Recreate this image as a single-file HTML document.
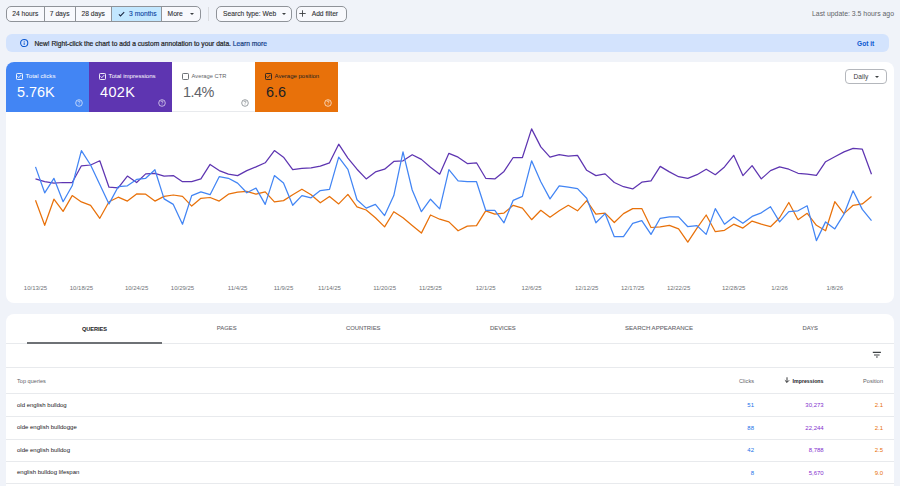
<!DOCTYPE html>
<html><head><meta charset="utf-8">
<style>
*{box-sizing:border-box;margin:0;padding:0}
html,body{width:900px;height:486px;overflow:hidden}
body{background:#f0f3f9;font-family:"Liberation Sans",sans-serif;position:relative;color:#202124}
.abs{position:absolute}
.seg{position:absolute;top:6px;height:15.5px;border:1px solid #8f9399;border-radius:5px;display:flex;overflow:hidden;background:#f8f9fd}
.seg div{height:100%;display:flex;align-items:center;justify-content:center;font-size:6.7px;white-space:nowrap;color:#303134;-webkit-text-stroke:0.1px #303134;border-right:1px solid #8f9399}
.seg div:last-child{border-right:none}
.btn{position:absolute;top:6px;height:15.5px;border:1px solid #8f9399;border-radius:5px;display:flex;align-items:center;font-size:6.7px;color:#303134;-webkit-text-stroke:0.1px #303134;background:#f8f9fd;white-space:nowrap}
.car{display:inline-block;width:0;height:0;border-left:2.5px solid transparent;border-right:2.5px solid transparent;border-top:2.5px solid #3c4043}
.card{position:absolute;background:#fff;border-radius:8px;overflow:hidden}
.tile{position:absolute;top:0;height:50.7px;width:83px}
.tile .cbs{position:absolute;left:10px;top:11.2px}
.tile .lbl{position:absolute;left:19.6px;top:10.5px;font-size:6.2px;line-height:8px;white-space:nowrap}
.tile .val{position:absolute;left:11px;top:22.4px;font-size:14.45px;line-height:16px;white-space:nowrap}
.tile .hlps{position:absolute;left:69px;top:37.2px}
.xl{position:absolute;top:284.5px;font-size:6px;color:#6f7378;white-space:nowrap;transform:translateX(-50%)}
.tab{position:absolute;top:325.4px;font-size:5.85px;color:#5f6368;white-space:nowrap;transform:translateX(-50%);-webkit-text-stroke:0.08px #5f6368}
.hr{position:absolute;left:6px;width:888px;height:1px;background:#e8eaed}
.q{position:absolute;left:17px;font-size:6px;color:#202124;white-space:nowrap}
.n{position:absolute;font-size:6px;white-space:nowrap;transform:translateX(-100%)}
</style></head><body>

<!-- top toolbar -->
<div class="seg" style="left:6px;width:195px">
  <div style="width:38px">24 hours</div>
  <div style="width:31.5px">7 days</div>
  <div style="width:36.2px">28 days</div>
  <div style="width:51px;background:#c2e7ff;color:#0842a0;-webkit-text-stroke:0.1px #0842a0"><svg width="7" height="6" viewBox="0 0 7 6" style="margin-right:4.5px;margin-left:1.5px"><path d="M0.9 3.4L2.5 4.9L6.2 1.2" fill="none" stroke="#1f2a44" stroke-width="1.1"/></svg>3 months</div>
  <div style="width:38.3px;justify-content:flex-start;padding-left:5.5px">More<i class="car" style="margin-left:7px"></i></div>
</div>
<div class="abs" style="left:208px;top:7px;width:1px;height:14px;background:#dadce0"></div>
<div class="btn" style="left:215.5px;width:76.5px;padding-left:6.6px">Search type: Web<i class="car" style="margin-left:6.2px"></i></div>
<div class="btn" style="left:296px;width:51px;padding-left:2.2px"><svg width="7" height="7" viewBox="0 0 7 7" style="margin-right:5.5px"><path d="M3.5 0.3v6.4M0.3 3.5h6.4" stroke="#3c4043" stroke-width="0.9"/></svg>Add filter</div>
<div class="abs" style="left:812px;top:9.5px;font-size:6.9px;color:#5f6368;white-space:nowrap">Last update: 3.5 hours ago</div>

<!-- banner -->
<div class="abs" style="left:6px;top:34px;width:882.5px;height:18.3px;background:#d3e3fd;border-radius:6px"></div>
<svg class="abs" style="left:19px;top:38px" width="10.4" height="10" viewBox="0 0 10.4 10"><circle cx="5.2" cy="5" r="3.6" fill="none" stroke="#0b57d0" stroke-width="1.05"/><path d="M5.2 4.4V7" stroke="#0b57d0" stroke-width="0.9"/><circle cx="5.2" cy="3.3" r="0.5" fill="#0b57d0"/></svg>
<div class="abs" style="left:34.5px;top:39.7px;font-size:6.66px;color:#1f1f1f;white-space:nowrap;-webkit-text-stroke:0.2px #1f1f1f">New! Right-click the chart to add a custom annotation to your data. <span style="color:#0b57d0">Learn more</span></div>
<div class="abs" style="left:857px;top:39.7px;font-size:6.6px;color:#0b57d0;white-space:nowrap;font-weight:bold">Got it</div>

<!-- chart card -->
<div class="card" style="left:6px;top:61.5px;width:888px;height:241px">
  <div class="tile" style="left:0;background:#4285f4;color:#fff"><svg class="cbs" width="7" height="7" viewBox="0 0 7 7"><rect x="0.5" y="0.5" width="6" height="6" rx="0.8" fill="none" stroke="#fff" stroke-width="0.9"/><path d="M1.5 3.4L2.8 4.7L5.4 1.9" fill="none" stroke="#fff" stroke-width="0.85"/></svg><div class="lbl">Total clicks</div><div class="val">5.76K</div><svg class="hlps" width="8" height="8" viewBox="0 0 8 8"><circle cx="4" cy="4" r="3.3" fill="none" stroke="rgba(255,255,255,0.8)" stroke-width="0.8"/><path d="M2.9 3.1C2.9 2.4 3.4 2 4 2C4.6 2 5.1 2.4 5.1 3C5.1 3.7 4 3.8 4 4.6" fill="none" stroke="rgba(255,255,255,0.8)" stroke-width="0.7"/><circle cx="4" cy="5.7" r="0.4" fill="rgba(255,255,255,0.8)"/></svg></div>
  <div class="tile" style="left:83px;background:#5e35b1;color:#fff"><svg class="cbs" width="7" height="7" viewBox="0 0 7 7"><rect x="0.5" y="0.5" width="6" height="6" rx="0.8" fill="none" stroke="#fff" stroke-width="0.9"/><path d="M1.5 3.4L2.8 4.7L5.4 1.9" fill="none" stroke="#fff" stroke-width="0.85"/></svg><div class="lbl" style="font-size:6.1px">Total impressions</div><div class="val" style="letter-spacing:0.35px">402K</div><svg class="hlps" width="8" height="8" viewBox="0 0 8 8"><circle cx="4" cy="4" r="3.3" fill="none" stroke="rgba(255,255,255,0.8)" stroke-width="0.8"/><path d="M2.9 3.1C2.9 2.4 3.4 2 4 2C4.6 2 5.1 2.4 5.1 3C5.1 3.7 4 3.8 4 4.6" fill="none" stroke="rgba(255,255,255,0.8)" stroke-width="0.7"/><circle cx="4" cy="5.7" r="0.4" fill="rgba(255,255,255,0.8)"/></svg></div>
  <div class="tile" style="left:166px;background:#fff;color:#5f6368;border-bottom:1px solid #e8eaed"><svg class="cbs" width="7" height="7" viewBox="0 0 7 7"><rect x="0.5" y="0.5" width="6" height="6" rx="0.8" fill="none" stroke="#5f6368" stroke-width="0.9"/></svg><div class="lbl" style="font-size:5.75px">Average CTR</div><div class="val" style="color:#5f6368;letter-spacing:-0.55px">1.4%</div><svg class="hlps" width="8" height="8" viewBox="0 0 8 8"><circle cx="4" cy="4" r="3.3" fill="none" stroke="#80868b" stroke-width="0.8"/><path d="M2.9 3.1C2.9 2.4 3.4 2 4 2C4.6 2 5.1 2.4 5.1 3C5.1 3.7 4 3.8 4 4.6" fill="none" stroke="#80868b" stroke-width="0.7"/><circle cx="4" cy="5.7" r="0.4" fill="#80868b"/></svg></div>
  <div class="tile" style="left:249px;background:#e8710a;color:#202124"><svg class="cbs" width="7" height="7" viewBox="0 0 7 7"><rect x="0.5" y="0.5" width="6" height="6" rx="0.8" fill="none" stroke="#202124" stroke-width="0.9"/><path d="M1.5 3.4L2.8 4.7L5.4 1.9" fill="none" stroke="#202124" stroke-width="0.85"/></svg><div class="lbl" style="font-size:6.0px">Average position</div><div class="val">6.6</div><svg class="hlps" width="8" height="8" viewBox="0 0 8 8"><circle cx="4" cy="4" r="3.3" fill="none" stroke="rgba(255,255,255,0.85)" stroke-width="0.8"/><path d="M2.9 3.1C2.9 2.4 3.4 2 4 2C4.6 2 5.1 2.4 5.1 3C5.1 3.7 4 3.8 4 4.6" fill="none" stroke="rgba(255,255,255,0.85)" stroke-width="0.7"/><circle cx="4" cy="5.7" r="0.4" fill="rgba(255,255,255,0.85)"/></svg></div>
  <div class="abs" style="left:839px;top:7.5px;width:41.5px;height:15px;border:1px solid #b4b7bc;border-radius:4px;font-size:6.6px;color:#3c4043;padding-left:7.6px;line-height:13px;white-space:nowrap">Daily<i class="car" style="margin-left:7px;vertical-align:1px"></i></div>
</div>

<svg class="abs" style="left:0;top:0" width="900" height="486" viewBox="0 0 900 486">
  <polyline fill="none" stroke="#e8710a" stroke-width="1.25" stroke-linejoin="round" points="35.5,200.3 44.7,225.3 53.9,199.2 63.1,211.4 72.2,195.6 81.4,201.9 90.6,205.3 99.8,218.3 109.0,201.7 118.2,197.2 127.4,201.1 136.6,193.9 145.7,194.2 154.9,201.1 164.1,196.4 173.3,195.0 182.5,196.4 191.7,206.1 200.9,198.3 210.1,197.5 219.2,201.1 228.4,194.2 237.6,192.2 246.8,191.4 256.0,194.2 265.2,191.9 274.4,201.9 283.5,200.6 292.7,194.7 301.9,189.2 311.1,194.7 320.3,202.8 329.5,196.4 338.7,203.9 347.9,194.4 357.0,206.9 366.2,210.0 375.4,217.8 384.6,226.9 393.8,211.7 403.0,217.8 412.2,225.6 421.4,233.1 430.5,215.0 439.7,219.2 448.9,221.9 458.1,230.8 467.3,226.1 476.5,225.6 485.7,210.8 494.8,214.2 504.0,213.1 513.2,205.3 522.4,208.1 531.6,219.7 540.8,210.3 550.0,217.2 559.2,210.8 568.3,205.3 577.5,210.8 586.7,200.6 595.9,214.2 605.1,213.1 614.3,222.5 623.5,213.6 632.7,208.6 641.8,208.6 651.0,227.5 660.2,226.9 669.4,225.3 678.6,228.9 687.8,242.2 697.0,228.1 706.2,215.0 715.3,231.7 724.5,230.3 733.7,224.2 742.9,228.1 752.1,221.1 761.3,224.2 770.5,226.7 779.6,217.8 788.8,202.5 798.0,219.7 807.2,213.3 816.4,225.3 825.6,230.8 834.8,201.7 844.0,213.6 853.1,205.3 862.3,203.9 871.5,196.4"/>
  <polyline fill="none" stroke="#5e35b1" stroke-width="1.25" stroke-linejoin="round" points="35.5,178.9 44.7,181.7 53.9,183.1 63.1,182.5 72.2,182.5 81.4,165.8 90.6,165.0 99.8,160.8 109.0,187.2 118.2,187.8 127.4,176.1 136.6,182.5 145.7,173.9 154.9,173.3 164.1,176.1 173.3,175.6 182.5,181.7 191.7,181.7 200.9,178.9 210.1,164.4 219.2,170.6 228.4,174.2 237.6,175.6 246.8,170.6 256.0,166.9 265.2,162.8 274.4,150.6 283.5,157.2 292.7,169.7 301.9,168.3 311.1,167.8 320.3,166.1 329.5,162.8 338.7,144.2 347.9,158.1 357.0,169.2 366.2,178.9 375.4,171.9 384.6,169.2 393.8,161.4 403.0,160.8 412.2,154.7 421.4,159.4 430.5,167.2 439.7,174.2 448.9,153.3 458.1,157.2 467.3,163.6 476.5,162.8 485.7,178.3 494.8,178.9 504.0,171.4 513.2,157.5 522.4,157.5 531.6,128.9 540.8,146.9 550.0,157.2 559.2,154.7 568.3,156.1 577.5,155.3 586.7,170.3 595.9,175.6 605.1,173.9 614.3,182.5 623.5,186.7 632.7,188.9 641.8,182.2 651.0,180.8 660.2,166.4 669.4,171.9 678.6,176.7 687.8,178.3 697.0,174.7 706.2,169.2 715.3,174.7 724.5,166.9 733.7,155.3 742.9,175.6 752.1,165.6 761.3,178.9 770.5,170.6 779.6,166.9 788.8,169.2 798.0,173.3 807.2,174.2 816.4,175.3 825.6,161.7 834.8,156.7 844.0,151.9 853.1,148.3 862.3,149.2 871.5,174.2"/>
  <polyline fill="none" stroke="#4285f4" stroke-width="1.25" stroke-linejoin="round" points="35.5,166.9 44.7,192.8 53.9,178.3 63.1,201.7 72.2,185.8 81.4,150.6 90.6,165.0 99.8,184.4 109.0,203.9 118.2,186.7 127.4,185.8 136.6,179.4 145.7,178.3 154.9,169.7 164.1,198.9 173.3,204.4 182.5,224.2 191.7,195.6 200.9,191.9 210.1,194.7 219.2,176.7 228.4,178.3 237.6,183.1 246.8,192.8 256.0,188.1 265.2,204.4 274.4,175.6 283.5,183.1 292.7,205.3 301.9,195.6 311.1,197.8 320.3,190.6 329.5,189.4 338.7,157.2 347.9,169.4 357.0,199.7 366.2,208.1 375.4,204.4 384.6,215.6 393.8,195.6 403.0,151.9 412.2,190.0 421.4,211.7 430.5,199.2 439.7,208.9 448.9,169.7 458.1,180.8 467.3,181.7 476.5,181.7 485.7,210.3 494.8,210.3 504.0,222.8 513.2,200.3 522.4,196.4 531.6,160.8 540.8,181.7 550.0,198.9 559.2,185.8 568.3,187.2 577.5,188.6 586.7,198.3 595.9,222.8 605.1,213.6 614.3,236.7 623.5,236.7 632.7,223.3 641.8,220.6 651.0,234.4 660.2,218.3 669.4,216.9 678.6,216.9 687.8,226.7 697.0,225.6 706.2,234.4 715.3,208.6 724.5,224.2 733.7,216.9 742.9,223.3 752.1,216.4 761.3,212.8 770.5,206.7 779.6,221.9 788.8,211.7 798.0,210.8 807.2,205.8 816.4,240.6 825.6,221.9 834.8,228.9 844.0,214.2 853.1,190.8 862.3,209.4 871.5,220.6"/>
</svg>

<div class="xl" style="left:35.5px">10/13/25</div>
<div class="xl" style="left:81.4px">10/18/25</div>
<div class="xl" style="left:136.6px">10/24/25</div>
<div class="xl" style="left:182.5px">10/29/25</div>
<div class="xl" style="left:237.6px">11/4/25</div>
<div class="xl" style="left:283.5px">11/9/25</div>
<div class="xl" style="left:329.5px">11/14/25</div>
<div class="xl" style="left:384.6px">11/20/25</div>
<div class="xl" style="left:430.5px">11/25/25</div>
<div class="xl" style="left:485.7px">12/1/25</div>
<div class="xl" style="left:531.6px">12/6/25</div>
<div class="xl" style="left:586.7px">12/12/25</div>
<div class="xl" style="left:632.7px">12/17/25</div>
<div class="xl" style="left:678.6px">12/22/25</div>
<div class="xl" style="left:733.7px">12/28/25</div>
<div class="xl" style="left:779.6px">1/2/26</div>
<div class="xl" style="left:834.8px">1/8/26</div>

<!-- table card -->
<div class="card" style="left:6px;top:314px;width:888px;height:200px"></div>
<div class="tab" style="left:94.5px;color:#202124;font-weight:bold;font-size:5.6px;top:325.8px">QUERIES</div>
<div class="tab" style="left:226.7px">PAGES</div>
<div class="tab" style="left:363.3px">COUNTRIES</div>
<div class="tab" style="left:502.9px">DEVICES</div>
<div class="tab" style="left:659px;font-size:6.05px">SEARCH APPEARANCE</div>
<div class="tab" style="left:810.2px">DAYS</div>
<div class="hr" style="top:343px"></div>
<div class="abs" style="left:27px;top:342px;width:135px;height:2px;background:#6e7175"></div>
<svg class="abs" style="left:871px;top:349.5px" width="11" height="9" viewBox="0 0 11 9"><path d="M1.8 2.4h8.1M3 5h5.6M5 7h1.8" stroke="#3c4043" stroke-width="1.1"/></svg>
<div class="hr" style="top:367px"></div>
<div class="q" style="top:377.6px;color:#5f6368;font-size:5.6px">Top queries</div>
<div class="n" style="left:754px;top:377.6px;color:#5f6368;font-size:5.6px">Clicks</div>
<svg class="abs" style="left:783.5px;top:377.4px" width="6" height="6" viewBox="0 0 6 6"><path d="M3 0.3V5.4M0.9 3.3L3 5.4L5.1 3.3" fill="none" stroke="#202124" stroke-width="0.9"/></svg>
<div class="n" style="left:823.5px;top:378.1px;color:#202124;font-size:5.25px;font-weight:bold">Impressions</div>
<div class="n" style="left:883px;top:377.6px;color:#5f6368;font-size:5.6px">Position</div>
<div class="hr" style="top:393px"></div>

<div class="q" style="top:401.5px">old english bulldog</div>
<div class="n" style="left:754px;top:401.5px;color:#1a73e8">51</div>
<div class="n" style="left:823.7px;top:401.5px;color:#8430ce">30,273</div>
<div class="n" style="left:883px;top:401.5px;color:#e8710a">2.1</div>
<div class="hr" style="top:416px"></div>

<div class="q" style="top:424.3px">olde english bulldogge</div>
<div class="n" style="left:754px;top:424.6px;color:#1a73e8">88</div>
<div class="n" style="left:823.7px;top:424.6px;color:#8430ce">22,244</div>
<div class="n" style="left:883px;top:424.6px;color:#e8710a">2.1</div>
<div class="hr" style="top:438.5px"></div>

<div class="q" style="top:447px">olde english bulldog</div>
<div class="n" style="left:754px;top:447px;color:#1a73e8">42</div>
<div class="n" style="left:823.7px;top:447px;color:#8430ce">8,788</div>
<div class="n" style="left:883px;top:447px;color:#e8710a">2.5</div>
<div class="hr" style="top:461px"></div>

<div class="q" style="top:469.1px">english bulldog lifespan</div>
<div class="n" style="left:754px;top:469.5px;color:#1a73e8">8</div>
<div class="n" style="left:823.7px;top:469.5px;color:#8430ce">5,670</div>
<div class="n" style="left:883px;top:469.5px;color:#e8710a">9.0</div>
<div class="hr" style="top:483.3px"></div>

</body></html>
